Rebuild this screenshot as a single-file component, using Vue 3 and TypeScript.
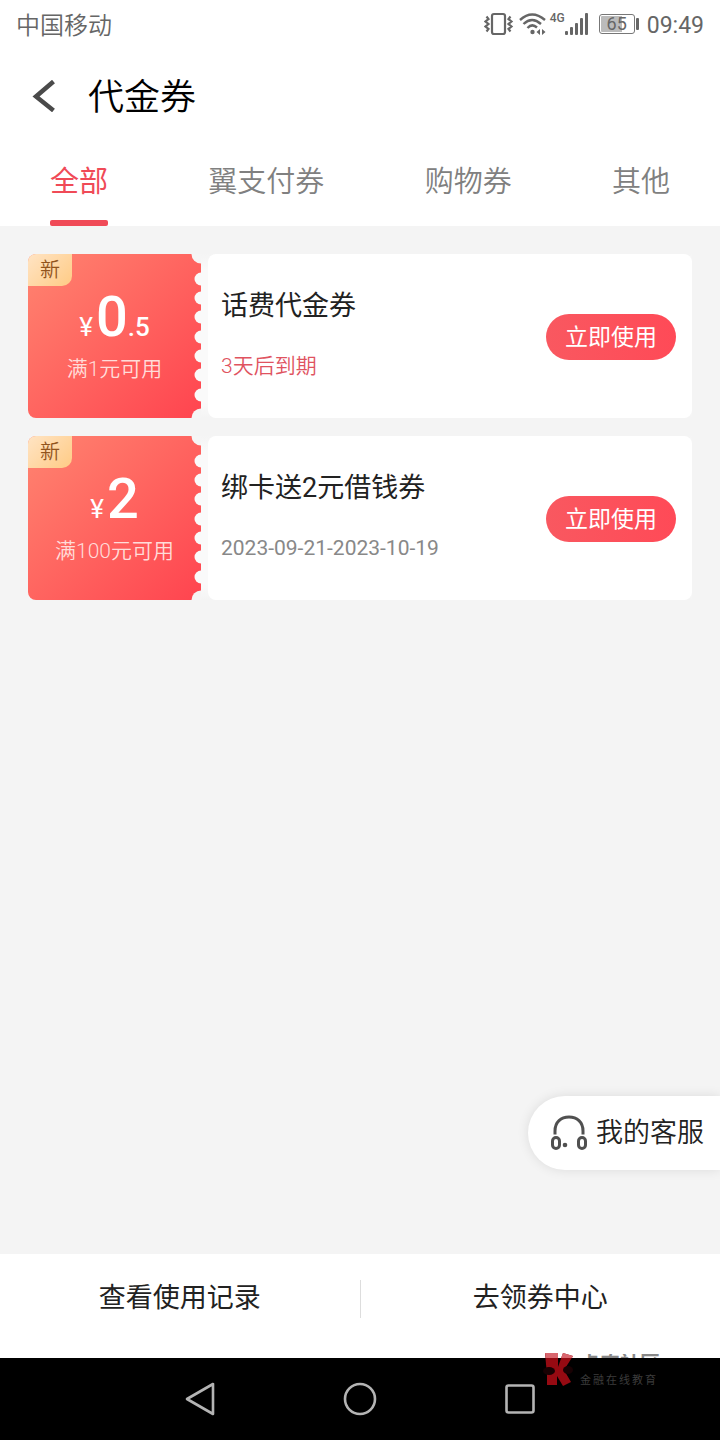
<script setup lang="ts">
import { ref } from 'vue'

interface Coupon {
  id: number
  whole: string
  fraction: string
  condition: string
  title: string
  validity: string
  expiring: boolean
}

const tabs: string[] = ['全部', '翼支付券', '购物券', '其他']
const activeTab = ref<string>('全部')

const coupons: Coupon[] = [
  { id: 1, whole: '0', fraction: '.5', condition: '满1元可用', title: '话费代金券', validity: '3天后到期', expiring: true },
  { id: 2, whole: '2', fraction: '', condition: '满100元可用', title: '绑卡送2元借钱券', validity: '2023-09-21-2023-10-19', expiring: false },
]

const notches: number[] = [25, 44, 63, 83, 102, 121, 141]
</script>

<template>
  <div class="page">
    <div class="status">
      <span class="carrier">中国移动</span>
      <svg class="s-vibrate" width="30" height="26" viewBox="0 0 30 26" fill="none" stroke="#666" stroke-width="2.2">
        <rect x="8" y="3" width="13" height="20" rx="2" />
        <path d="M2.500 5.500l2 2.500-3 2.500 3 2.500-3 2.500 3 2.500-2 2.500M26.500 5.500l-2 2.500 3 2.500-3 2.500 3 2.500-3 2.500 2 2.500" />
      </svg>
      <svg class="s-wifi" width="28" height="24" viewBox="0 0 28 24" fill="none" stroke="#666" stroke-width="2.400">
        <path d="M1 8Q13 -3 26 8M4.500 12Q13 4 22 12M8.500 16Q13 11 18 15.500" />
        <circle cx="13.500" cy="20" r="2.200" fill="#666" stroke="none" />
        <path d="M21 17v6l-3.500-3zM23 17v6l3.500-3z" fill="#666" stroke="none" />
      </svg>
      <span class="net">4G</span>
      <svg class="s-signal" width="24" height="24" viewBox="0 0 24 24" fill="#666">
        <rect x="0" y="19" width="3" height="4" rx="1" />
        <rect x="5" y="15" width="3" height="8" rx="1" />
        <rect x="10" y="11" width="3" height="12" rx="1" />
        <rect x="15" y="6" width="3" height="17" rx="1" />
        <rect x="20" y="1" width="3" height="22" rx="1" />
      </svg>
      <span class="battery"><span class="cell">65</span><span class="cap"></span></span>
      <span class="clock">09:49</span>
    </div>

    <header class="header">
      <button class="back" type="button" aria-label="返回">
        <svg width="24" height="32" viewBox="0 0 24 32" fill="none" stroke="#4a4a4a" stroke-width="4.500">
          <path d="M21.500 1.500L4 16.500L21.500 30.500" />
        </svg>
      </button>
      <h1>代金券</h1>
    </header>

    <nav class="tabs">
      <button
        v-for="tab in tabs"
        :key="tab"
        type="button"
        :class="['tab', { active: tab === activeTab }]"
        @click="activeTab = tab"
      >{{ tab }}</button>
    </nav>

    <main class="list">
      <article v-for="coupon in coupons" :key="coupon.id" class="coupon">
        <div class="value">
          <span class="badge">新</span>
          <div class="amount">
            <span class="yen">¥</span><span class="whole">{{ coupon.whole }}</span><span v-if="coupon.fraction" class="fraction">{{ coupon.fraction }}</span>
          </div>
          <div class="condition">{{ coupon.condition }}</div>
          <svg class="edge" width="10" height="164" viewBox="0 0 10 164" fill="#fafafa">
            <circle cx="10" cy="0" r="9.500" fill="#f5f5f5" />
            <circle v-for="y in notches" :key="y" cx="10" :cy="y" r="6.500" />
            <circle cx="10" cy="164" r="9.500" fill="#f5f5f5" />
          </svg>
        </div>
        <div class="detail">
          <div class="info">
            <h2>{{ coupon.title }}</h2>
            <p :class="{ expiring: coupon.expiring }">{{ coupon.validity }}</p>
          </div>
          <button class="use" type="button">立即使用</button>
        </div>
      </article>
    </main>

    <button class="service" type="button">
      <svg width="38" height="36" viewBox="0 0 38 36" fill="none" stroke="#505050" stroke-width="3">
        <path d="M5 19.500V16C5 7 11 2 19 2s14 5 14 14v3.500" />
        <rect x="2.500" y="22.500" width="7" height="11" rx="3.500" />
        <rect x="28.500" y="22.500" width="7" height="11" rx="3.500" />
        <circle cx="15" cy="30" r="2.300" fill="#505050" stroke="none" />
      </svg>
      <span class="service-label">我的客服</span>
    </button>

    <footer class="actions">
      <button type="button">查看使用记录</button>
      <button type="button">去领券中心</button>
    </footer>

    <div class="system">
      <button type="button" aria-label="后退">
        <svg width="36" height="36" viewBox="0 0 36 36" fill="none" stroke="#b4b4b4" stroke-width="2.600" stroke-linejoin="round">
          <path d="M31 3V33L5 18z" />
        </svg>
      </button>
      <button type="button" aria-label="主屏幕">
        <svg width="36" height="36" viewBox="0 0 36 36" fill="none" stroke="#b4b4b4" stroke-width="2.600">
          <circle cx="18" cy="18" r="15" />
        </svg>
      </button>
      <button type="button" aria-label="最近任务">
        <svg width="36" height="36" viewBox="0 0 36 36" fill="none" stroke="#b4b4b4" stroke-width="2.600">
          <rect x="4.500" y="4.500" width="27" height="27" rx="2" />
        </svg>
      </button>
      <div class="mark">
        <svg width="32" height="36" viewBox="0 0 32 36">
          <path d="M2 1H15V15L20 1L30 4L21 18L28 30L20 34L14 24V33H4V23z" fill="#960a12" />
          <path d="M2 1H15V6H3zM20 1L30 4L29 6H18z" fill="#d9666e" />
          <ellipse cx="6" cy="19" rx="6" ry="4" fill="#180103" />
          <ellipse cx="25" cy="18" rx="5" ry="4" fill="#180103" />
        </svg>
        <div class="mark-text">
          <span class="mark-name">卡农社区</span>
          <span class="mark-sub">金融在线教育</span>
        </div>
      </div>
    </div>
  </div>
</template>

<style>
body {
  margin: 0;
}
</style>

<style scoped>
.page {
  display: flex;
  flex-direction: column;
  position: relative;
  min-height: 100vh;
  background: #f4f4f4;
  font-family: Roboto, "Noto Sans CJK SC", sans-serif;
  color: #222;
}

button {
  margin: 0;
  padding: 0;
  border: 0;
  background: none;
  font: inherit;
  color: inherit;
  cursor: pointer;
}

svg {
  display: block;
  flex: none;
}

.status {
  display: flex;
  align-items: center;
  height: 48px;
  padding: 0 16px;
  background: #fff;
  color: #666;
}

.carrier {
  margin-right: auto;
  padding-top: 4px;
  font-size: 24px;
  font-weight: 350;
  line-height: 44px;
}

.s-wifi {
  margin-left: 5px;
}

.net {
  align-self: flex-start;
  margin: 11px 0 0 3px;
  font-size: 12px;
  line-height: 14px;
  font-weight: 500;
}

.battery {
  display: flex;
  align-items: center;
  margin: 0 8px 0 10px;
}

.cell {
  box-sizing: border-box;
  width: 36px;
  padding: 1px;
  border: 1px solid #777;
  border-radius: 3px;
  background: linear-gradient(to right, #bbb 65%, #fff 65%) content-box;
  font-size: 18px;
  line-height: 16px;
  text-align: center;
}

.cap {
  width: 3px;
  height: 12px;
  margin-left: 1px;
  border-radius: 1px;
  background: #666;
}

.clock {
  padding-top: 2px;
  font-size: 23px;
}

.header {
  display: flex;
  align-items: center;
  height: 96px;
  padding-left: 32px;
  background: #fff;
}

.header h1 {
  margin: 0 0 0 32px;
  padding-top: 4px;
  font-size: 36px;
  font-weight: 350;
  line-height: 48px;
  color: #000;
}

.tabs {
  display: flex;
  justify-content: space-between;
  height: 82px;
  padding: 0 50px;
  background: #fff;
}

.tab {
  position: relative;
  padding-bottom: 12px;
  font-size: 29px;
  font-weight: 350;
  color: #808080;
}

.tab.active {
  font-weight: 400;
  color: #f04a57;
}

.tab.active::after {
  content: "";
  position: absolute;
  right: 0;
  bottom: 0;
  left: 0;
  height: 6px;
  border-radius: 2px;
  background: #f04a57;
}

.list {
  display: flex;
  flex: 1;
  flex-direction: column;
  gap: 18px;
  padding: 28px;
}

.coupon {
  display: flex;
  height: 164px;
  background: linear-gradient(to bottom, #f4f4f4, #fafafa 16px, #fafafa calc(100% - 16px), #f4f4f4);
}

.value {
  position: relative;
  display: flex;
  flex: none;
  flex-direction: column;
  align-items: center;
  box-sizing: border-box;
  width: 173px;
  padding-top: 33px;
  border-radius: 8px 0 0 8px;
  background: linear-gradient(135deg, #ff8470 0%, #ff444f 100%);
  color: #fff;
}

.badge {
  position: absolute;
  top: 0;
  left: 0;
  width: 44px;
  border-radius: 8px 0 10px 0;
  background: linear-gradient(135deg, #ffe4c4, #ffcb85);
  font-size: 20px;
  font-weight: 350;
  line-height: 32px;
  text-align: center;
  color: #91541c;
}

.edge {
  position: absolute;
  top: 0;
  right: 0;
}

.amount {
  display: flex;
  align-items: baseline;
  height: 66px;
  font-weight: 500;
  line-height: 60px;
}

.yen {
  margin-right: 3px;
  font-size: 26px;
  font-weight: 400;
}

.whole {
  font-size: 56px;
}

.fraction {
  font-size: 26px;
}

.condition {
  font-size: 21px;
  font-weight: 350;
  line-height: 32px;
  color: #ffdcd9;
}

.detail {
  display: flex;
  flex: 1;
  align-items: center;
  justify-content: space-between;
  margin-left: 7px;
  padding: 0 16px 0 13px;
  border-radius: 8px;
  background: #fff;
}

.info {
  padding-bottom: 6px;
}

.info h2 {
  margin: 0 0 28px;
  padding-top: 2px;
  font-size: 27px;
  font-weight: 400;
  line-height: 36px;
  color: #222;
}

.info p {
  margin: 0;
  font-size: 21px;
  line-height: 28px;
  color: #888;
}

.info .expiring {
  font-weight: 350;
  color: #e0535f;
}

.use {
  width: 130px;
  height: 46px;
  margin-top: 2px;
  padding-bottom: 4px;
  border-radius: 23px;
  background: linear-gradient(to right, #f95860, #ff4a57);
  font-size: 23px;
  color: #fff;
}

.service {
  position: absolute;
  right: 0;
  bottom: 270px;
  display: flex;
  align-items: center;
  gap: 8px;
  height: 74px;
  padding: 0 16px 0 22px;
  border-radius: 37px 0 0 37px;
  background: #fff;
  box-shadow: 0 0 12px rgba(0, 0, 0, 0.1);
  font-size: 27px;
  font-weight: 350;
  color: #222;
}

.service-label {
  padding-bottom: 6px;
}

.actions {
  display: flex;
  align-items: center;
  height: 104px;
  background: #fff;
}

.actions button {
  flex: 1;
  height: 38px;
  margin-bottom: 14px;
  padding-bottom: 2px;
  font-size: 27px;
  line-height: 32px;
  color: #222;
}

.actions button + button {
  border-left: 1px solid #ddd;
}

.system {
  position: relative;
  display: flex;
  align-items: center;
  justify-content: center;
  gap: 124px;
  height: 82px;
  background: #000;
}

.mark {
  position: absolute;
  top: -6px;
  right: 60px;
  display: flex;
  gap: 5px;
}

.mark-text {
  display: flex;
  flex-direction: column;
  justify-content: space-between;
  height: 34px;
  padding-top: 2px;
}

.mark-name {
  height: 4px;
  overflow: hidden;
  font-size: 20px;
  line-height: 20px;
  font-weight: 700;
  color: #888;
}

.mark-sub {
  font-size: 11px;
  line-height: 14px;
  letter-spacing: 2px;
  color: #3c3c3c;
}
</style>
